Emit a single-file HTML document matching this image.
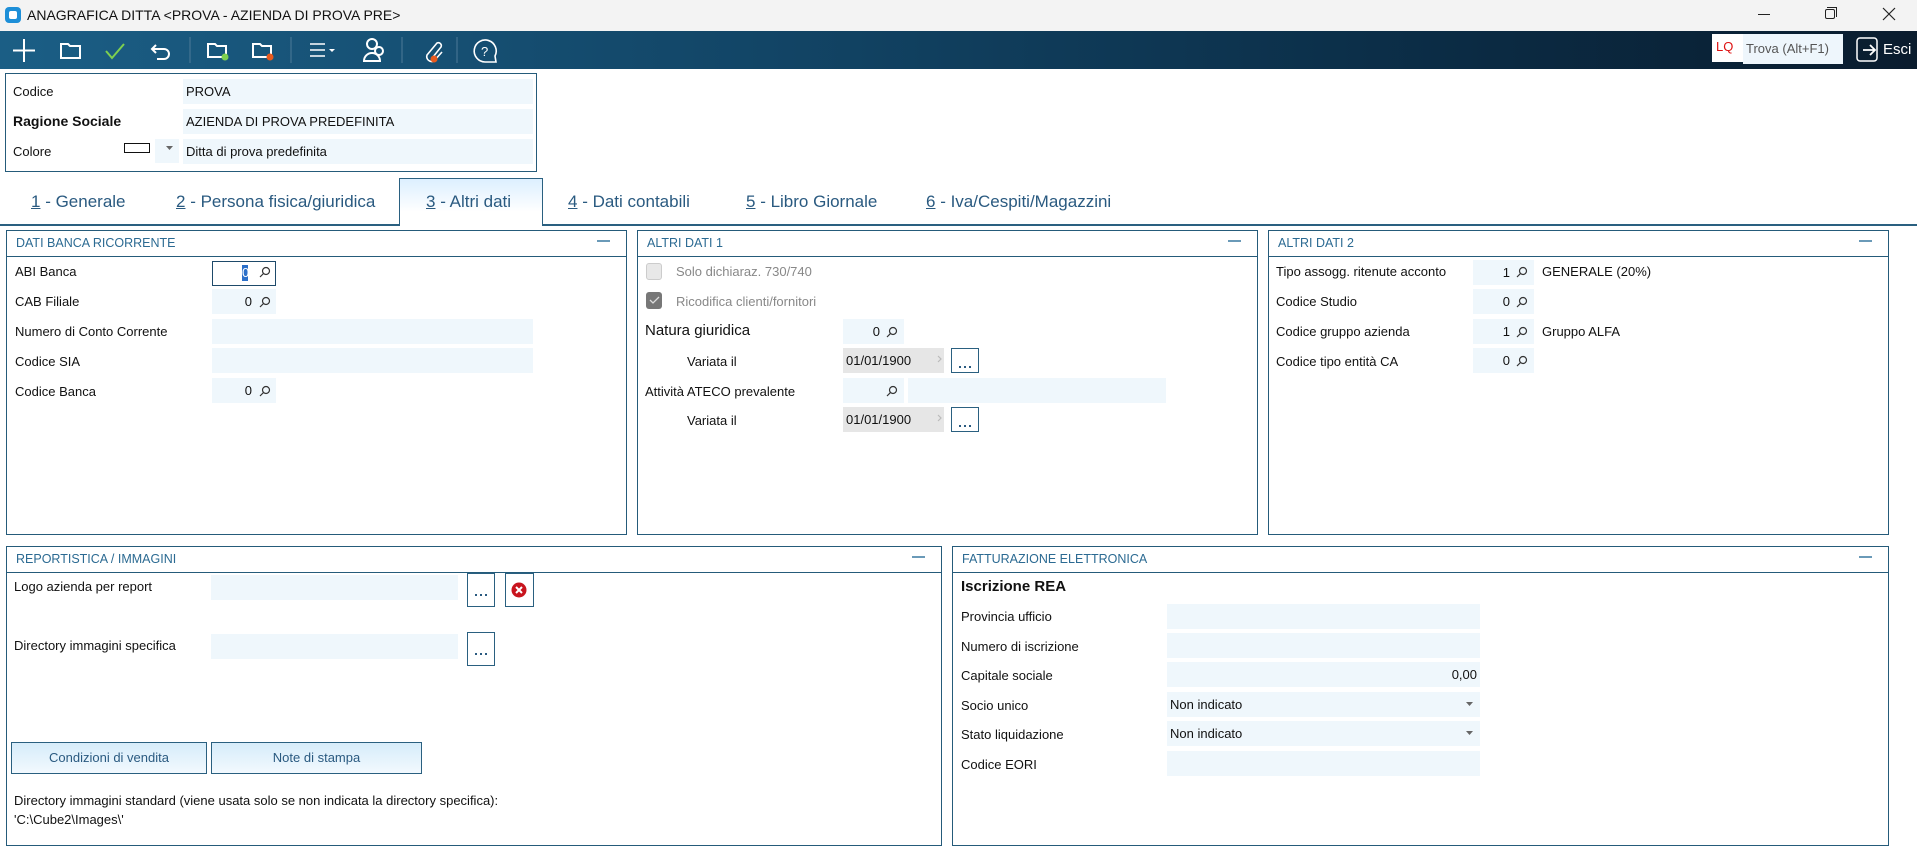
<!DOCTYPE html>
<html><head><meta charset="utf-8">
<style>
*{box-sizing:border-box;margin:0;padding:0}
body{width:1917px;height:840px;overflow:hidden;background:#fff;font-family:"Liberation Sans",Tahoma,sans-serif;font-size:13px;color:#111;position:relative}
.a{position:absolute}
.lbl{position:absolute;line-height:16px;white-space:nowrap}
.f{position:absolute;background:#eff7fc;height:25px}
.num{position:absolute;background:#eff7fc;height:25px;text-align:right;padding-right:24px;line-height:25px}
.panel{position:absolute;border:1.5px solid #255b7a;background:#fff}
.ph{height:26px;border-bottom:1.5px solid #255b7a;color:#2b6a92;font-size:12.5px;line-height:25px;padding-left:9px}
.ph i{position:absolute;right:16px;top:9px;width:13px;height:2px;background:#6a9ab8}
.btn{position:absolute;border:1.5px solid #2a6080;background:#fff;text-align:center;color:#2a5a80;font-size:12px;line-height:22px}
.tab{position:absolute;top:192px;font-size:17px;color:#2a5a80;white-space:nowrap}
.tab u{text-decoration:underline}
.date{position:absolute;background:#e6e6e6;height:25px;line-height:25px;padding-left:3px}
</style></head><body>
<div class="a" style="left:0;top:0;width:1917px;height:31px;background:#f3f3f3"></div>
<div class="a" style="left:5px;top:7px;width:16px;height:16px;background:#1d8fd8;border-radius:4px"><div class="a" style="left:4px;top:4px;width:8px;height:8px;background:#fff;border-radius:2px"></div></div>
<div class="lbl" style="left:27px;top:7px;font-size:14px">ANAGRAFICA DITTA &lt;PROVA - AZIENDA DI PROVA PRE&gt;</div>
<div class="a" style="left:1758px;top:14px;width:12px;height:1px;background:#222"></div>
<div class="a" style="left:1825px;top:9px;width:10px;height:10px;border:1px solid #222;border-radius:2px;background:#f3f3f3"></div>
<div class="a" style="left:1827px;top:7px;width:10px;height:10px;border-top:1px solid #222;border-right:1px solid #222"></div>
<svg class="a" style="left:1882px;top:7px" width="14" height="14"><path d="M1 1L13 13M13 1L1 13" stroke="#222" stroke-width="1.2"/></svg>
<div class="a" style="left:0;top:31px;width:1917px;height:38px;background:linear-gradient(90deg,#1b5e85 0%,#124566 40%,#0b2c45 75%,#0a1c2e 100%)"></div>
<svg class="a" style="left:0;top:31px" width="520" height="38" fill="none" stroke="#fff" stroke-width="2">
<path d="M24 8V31M13 19.5H35"/>
<path d="M61 13h7l2 2h10v12H61z" />
<path d="M106 20l6 7 12-14" stroke="#7ed04f"/>
<path d="M156 14l-4 4 4 4M152 18h12a5 5 0 0 1 0 10h-7"/>
<path d="M190 6v26M291 6v26M402 6v26M457 6v26" stroke="#4d7a98" stroke-width="1"/>
<path d="M208 13h7l2 2h9v11h-18z"/><circle cx="225" cy="26" r="3.5" fill="#7ed04f" stroke="none"/>
<path d="M253 13h7l2 2h9v11h-18z"/><circle cx="270" cy="26" r="3.5" fill="#e85a1e" stroke="none"/>
<path d="M310 13h15M310 19h15M310 25h15" stroke-width="1.5"/><path d="M329 18l3 3 3-3z" fill="#fff" stroke="none"/>
<circle cx="372" cy="13" r="5"/><path d="M364 30a8 8 0 0 1 16 0z"/><circle cx="379" cy="20" r="4"/>
<path d="M433 26l8-10a3 3 0 0 0-4-4l-10 12a5 5 0 0 0 7 6l8-9" stroke-width="1.6"/><circle cx="434" cy="28" r="3.5" fill="#e85a1e" stroke="none"/>
<path d="M485 31a11 11 0 1 1 10-6l1 6z" stroke-width="1.6"/><text x="481" y="25" fill="#fff" stroke="none" font-size="13" font-family="Liberation Sans">?</text>
</svg>
<div class="a" style="left:1712px;top:34px;width:31px;height:28px;background:#fff;color:#d11;font-size:13px;line-height:26px;padding-left:4px">LQ</div>
<div class="a" style="left:1743px;top:34px;width:100px;height:30px;background:#eef6fc;color:#555;font-size:13px;line-height:30px;padding-left:3px">Trova (Alt+F1)</div>
<svg class="a" style="left:1856px;top:37px" width="24" height="26" fill="none" stroke="#fff" stroke-width="1.8"><rect x="1" y="1" width="20" height="23" rx="3" stroke-width="1.5"/><path d="M7 13h12M14 8l5 5-5 5"/></svg>
<div class="lbl" style="left:1883px;top:42px;color:#fff;font-size:15px">Esci</div>
<div class="a" style="left:5px;top:73px;width:532px;height:99px;border:1.5px solid #255b7a"></div>
<div class="lbl" style="left:13px;top:84px">Codice</div>
<div class="f" style="left:183px;top:79px;width:350px;line-height:25px;padding-left:3px">PROVA</div>
<div class="lbl" style="left:13px;top:113px;font-weight:bold;font-size:14px">Ragione Sociale</div>
<div class="f" style="left:183px;top:109px;width:350px;line-height:25px;padding-left:3px">AZIENDA DI PROVA PREDEFINITA</div>
<div class="lbl" style="left:13px;top:144px">Colore</div>
<div class="a" style="left:124px;top:143px;width:26px;height:10px;border:1px solid #111"></div>
<div class="a" style="left:155px;top:139px;width:24px;height:24px;background:#eff7fc"></div>
<svg class="a" style="left:166px;top:146px" width="8" height="5"><path d="M0 0h7L3.5 4z" fill="#666"/></svg>
<div class="f" style="left:183px;top:139px;width:350px;line-height:25px;padding-left:3px">Ditta di prova predefinita</div>
<div class="a" style="left:0;top:224px;width:1917px;height:1.5px;background:#2a6080"></div>
<div class="a" style="left:399px;top:178px;width:144px;height:48px;border:1.5px solid #2a6080;border-bottom:none;background:linear-gradient(#dcefff,#fff 70%)"></div>
<div class="tab" style="left:31px"><u>1</u> - Generale</div>
<div class="tab" style="left:176px"><u>2</u> - Persona fisica/giuridica</div>
<div class="tab" style="left:426px"><u>3</u> - Altri dati</div>
<div class="tab" style="left:568px"><u>4</u> - Dati contabili</div>
<div class="tab" style="left:746px"><u>5</u> - Libro Giornale</div>
<div class="tab" style="left:926px"><u>6</u> - Iva/Cespiti/Magazzini</div>
<div class="panel" style="left:6px;top:230px;width:621px;height:305px"><div class="ph">DATI BANCA RICORRENTE<i></i></div></div>
<div class="lbl" style="left:15px;top:264px">ABI Banca</div>
<div class="a" style="left:212px;top:261px;width:64px;height:25px;border:1.5px solid #1e4a6a;background:#fff"></div>
<div class="a" style="left:242px;top:265px;width:6px;height:16px;background:#2b6fc9;color:#fff;font-size:13px;line-height:16px">0</div>
<div class="lbl" style="left:15px;top:294px">CAB Filiale</div>
<div class="num" style="left:212px;top:289px;width:64px">0</div>
<div class="lbl" style="left:15px;top:324px">Numero di Conto Corrente</div>
<div class="f" style="left:212px;top:319px;width:321px"></div>
<div class="lbl" style="left:15px;top:354px">Codice SIA</div>
<div class="f" style="left:212px;top:348px;width:321px"></div>
<div class="lbl" style="left:15px;top:384px">Codice Banca</div>
<div class="num" style="left:212px;top:378px;width:64px">0</div>
<div class="panel" style="left:637px;top:230px;width:621px;height:305px"><div class="ph">ALTRI DATI 1<i></i></div></div>
<div class="a" style="left:646px;top:263px;width:16px;height:17px;border:1px solid #ccc;border-radius:3px;background:#e8e8e8"></div>
<div class="lbl" style="left:676px;top:264px;color:#888">Solo dichiaraz. 730/740</div>
<div class="a" style="left:646px;top:292px;width:16px;height:17px;border-radius:3px;background:#777"></div>
<svg class="a" style="left:649px;top:296px" width="11" height="9"><path d="M1 4l3 3 6-6" stroke="#ddd" stroke-width="1.3" fill="none"/></svg>
<div class="lbl" style="left:676px;top:294px;color:#888">Ricodifica clienti/fornitori</div>
<div class="lbl" style="left:645px;top:323px;font-size:15px">Natura giuridica</div>
<div class="num" style="left:843px;top:319px;width:61px">0</div>
<div class="lbl" style="left:687px;top:354px">Variata il</div>
<div class="date" style="left:843px;top:348px;width:101px">01/01/1900</div>
<div class="btn" style="left:951px;top:348px;width:28px;height:25px"></div>
<div class="lbl" style="left:645px;top:384px">Attività ATECO prevalente</div>
<div class="num" style="left:843px;top:378px;width:61px"></div>
<div class="f" style="left:908px;top:378px;width:258px"></div>
<div class="lbl" style="left:687px;top:413px">Variata il</div>
<div class="date" style="left:843px;top:407px;width:101px">01/01/1900</div>
<div class="btn" style="left:951px;top:407px;width:28px;height:25px"></div>
<div class="panel" style="left:1268px;top:230px;width:621px;height:305px"><div class="ph">ALTRI DATI 2<i></i></div></div>
<div class="lbl" style="left:1276px;top:264px">Tipo assogg. ritenute acconto</div>
<div class="num" style="left:1473px;top:260px;width:61px">1</div>
<div class="lbl" style="left:1542px;top:264px">GENERALE (20%)</div>
<div class="lbl" style="left:1276px;top:294px">Codice Studio</div>
<div class="num" style="left:1473px;top:289px;width:61px">0</div>
<div class="lbl" style="left:1276px;top:324px">Codice gruppo azienda</div>
<div class="num" style="left:1473px;top:319px;width:61px">1</div>
<div class="lbl" style="left:1542px;top:324px">Gruppo ALFA</div>
<div class="lbl" style="left:1276px;top:354px">Codice tipo entità CA</div>
<div class="num" style="left:1473px;top:348px;width:61px">0</div>
<div class="panel" style="left:6px;top:546px;width:936px;height:300px"><div class="ph">REPORTISTICA / IMMAGINI<i></i></div></div>
<div class="lbl" style="left:14px;top:579px">Logo azienda per report</div>
<div class="f" style="left:211px;top:575px;width:247px"></div>
<div class="btn" style="left:467px;top:573px;width:28px;height:34px"></div>
<div class="a" style="left:505px;top:573px;width:29px;height:34px;border:1.5px solid #2a6080"></div>
<svg class="a" style="left:511px;top:582px" width="16" height="16"><circle cx="8" cy="8" r="7.5" fill="#c8141e"/><path d="M5 5l6 6M11 5l-6 6" stroke="#fff" stroke-width="2"/></svg>
<div class="lbl" style="left:14px;top:638px">Directory immagini specifica</div>
<div class="f" style="left:211px;top:634px;width:247px"></div>
<div class="btn" style="left:467px;top:632px;width:28px;height:34px"></div>
<div class="btn" style="left:11px;top:742px;width:196px;height:32px;line-height:29px;background:linear-gradient(#d6ecfa,#f2f9fe);font-size:13px">Condizioni di vendita</div>
<div class="btn" style="left:211px;top:742px;width:211px;height:32px;line-height:29px;background:linear-gradient(#d6ecfa,#f2f9fe);font-size:13px">Note di stampa</div>
<div class="lbl" style="left:14px;top:793px">Directory immagini standard (viene usata solo se non indicata la directory specifica):</div>
<div class="lbl" style="left:14px;top:812px">'C:\Cube2\Images\'</div>
<div class="panel" style="left:952px;top:546px;width:937px;height:300px"><div class="ph">FATTURAZIONE ELETTRONICA<i></i></div></div>
<div class="lbl" style="left:961px;top:579px;font-weight:bold;font-size:15px">Iscrizione REA</div>
<div class="lbl" style="left:961px;top:609px">Provincia ufficio</div>
<div class="f" style="left:1167px;top:604px;width:313px"></div>
<div class="lbl" style="left:961px;top:639px">Numero di iscrizione</div>
<div class="f" style="left:1167px;top:633px;width:313px"></div>
<div class="lbl" style="left:961px;top:668px">Capitale sociale</div>
<div class="f" style="left:1167px;top:662px;width:313px;text-align:right;padding-right:3px;line-height:25px">0,00</div>
<div class="lbl" style="left:961px;top:698px">Socio unico</div>
<div class="f" style="left:1167px;top:692px;width:313px;line-height:25px;padding-left:3px">Non indicato</div>
<svg class="a" style="left:1466px;top:702px" width="8" height="5"><path d="M0 0h7L3.5 4z" fill="#666"/></svg>
<div class="lbl" style="left:961px;top:727px">Stato liquidazione</div>
<div class="f" style="left:1167px;top:721px;width:313px;line-height:25px;padding-left:3px">Non indicato</div>
<svg class="a" style="left:1466px;top:731px" width="8" height="5"><path d="M0 0h7L3.5 4z" fill="#666"/></svg>
<div class="lbl" style="left:961px;top:757px">Codice EORI</div>
<div class="f" style="left:1167px;top:751px;width:313px"></div>
<svg class="a" style="left:0;top:0;pointer-events:none" width="1917" height="840" fill="none" stroke="#333" stroke-width="1.2">
<g id="m"><circle cx="266" cy="271" r="3.5"/><path d="M263.5 273.5L260 277"/></g>
<use href="#m" y="30"/><use href="#m" y="119"/>
<use href="#m" x="627" y="60"/><use href="#m" x="627" y="119"/>
<use href="#m" x="1257" y="0"/><use href="#m" x="1257" y="30"/><use href="#m" x="1257" y="60"/><use href="#m" x="1257" y="89"/>
<path d="M938 356l3 3-3 3M938 415l3 3-3 3" stroke="#bbb"/>
<g stroke="#2a5a80" stroke-width="2"><path d="M959 367h2M964 367h2M969 367h2M959 426h2M964 426h2M969 426h2M475 595h2M480 595h2M485 595h2M475 654h2M480 654h2M485 654h2"/></g>
</svg>
</body></html>
